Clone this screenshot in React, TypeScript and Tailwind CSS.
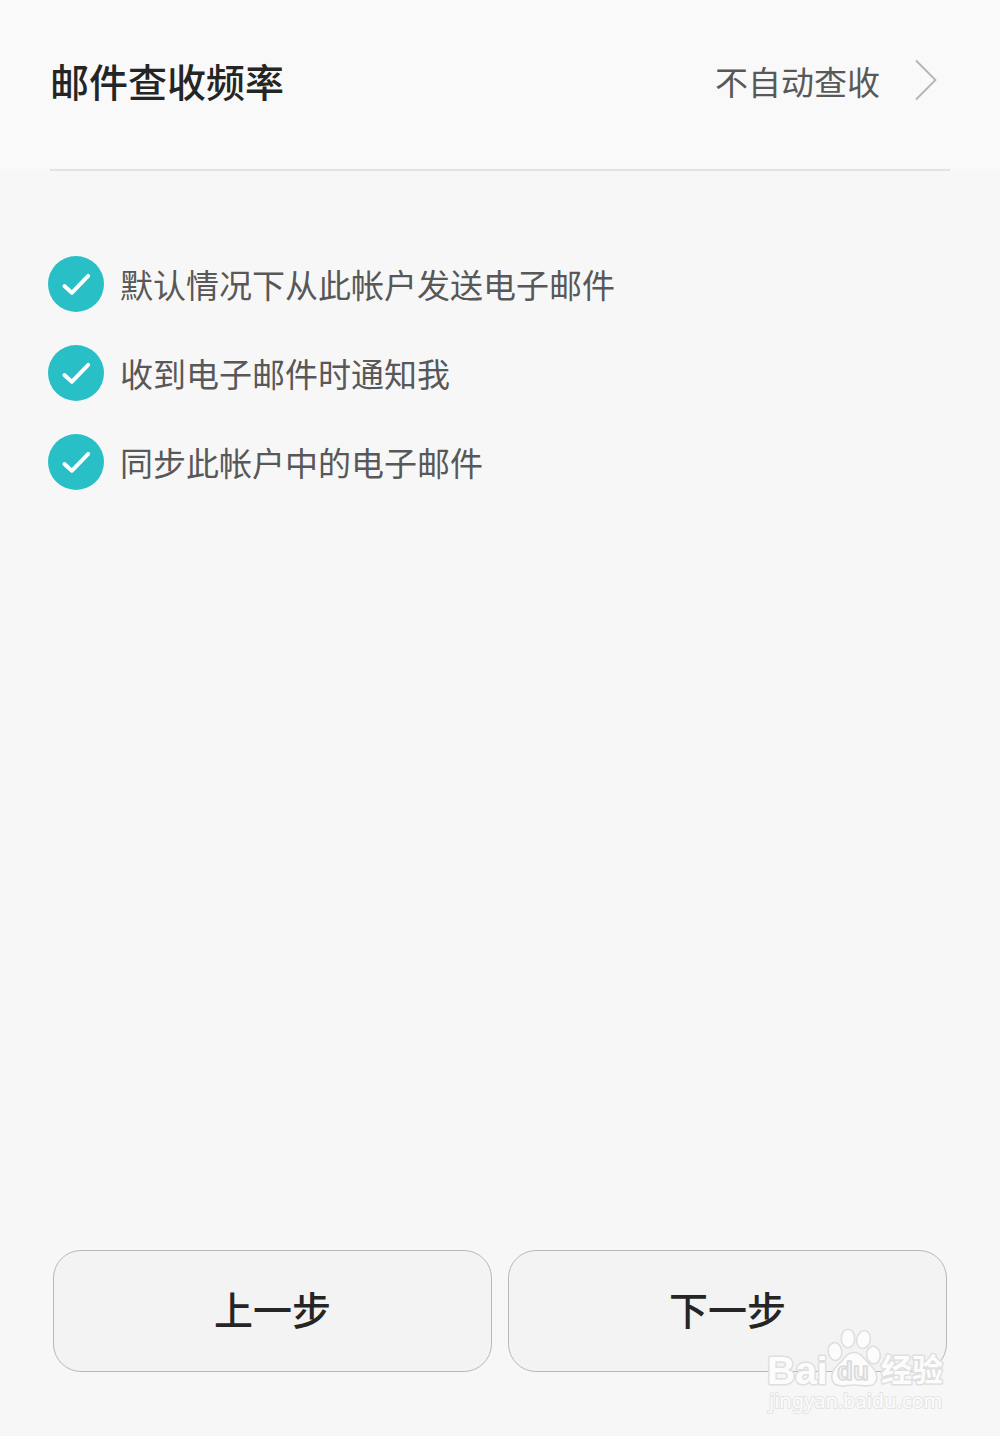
import { useState } from "react";

interface AccountOption {
  id: string;
  label: string;
}

const OPTIONS: AccountOption[] = [
  { id: "default-sender", label: "默认情况下从此帐户发送电子邮件" },
  { id: "notify", label: "收到电子邮件时通知我" },
  { id: "sync", label: "同步此帐户中的电子邮件" },
];

interface OptionRowProps {
  option: AccountOption;
  checked: boolean;
  onToggle: (id: string) => void;
}

function OptionRow({ option, checked, onToggle }: OptionRowProps) {
  return (
    <li className="flex items-center gap-4">
      <span className="relative size-14 shrink-0">
        <input
          id={option.id}
          type="checkbox"
          checked={checked}
          onChange={() => onToggle(option.id)}
          className="block size-14 appearance-none rounded-full border-2 border-[#b5b5b5] checked:border-0 checked:bg-[#29bfc7]"
        />
        {checked && (
          <svg viewBox="0 0 56 56" className="pointer-events-none absolute inset-0 size-14" fill="none" aria-hidden="true">
            <path d="M16.4 30 23.8 36.8 40.2 19.8" stroke="#fff" strokeWidth="3.9" strokeLinecap="round" strokeLinejoin="round" />
          </svg>
        )}
      </span>
      <label htmlFor={option.id} className="text-[33px] leading-10 text-[#585858]">
        {option.label}
      </label>
    </li>
  );
}

function StepButton({ children }: { children: string }) {
  return (
    <button
      type="button"
      className="h-[122px] flex-1 rounded-[28px] border border-[#b8b8b8] bg-[#f3f3f3] pb-1.5 text-[39px] font-medium text-[#252525]"
    >
      {children}
    </button>
  );
}

function Watermark() {
  return (
    <svg
      viewBox="0 0 184 92"
      className="pointer-events-none absolute right-[52px] bottom-[18px] h-[92px] w-[184px]"
      fill="#fcfcfc"
      stroke="#dfdfdf"
      strokeWidth="1.6"
      strokeLinejoin="round"
      role="img"
      aria-label="Baidu 经验"
    >
      <g paintOrder="stroke" strokeWidth="3">
        <text x="3" y="58" fontSize="39" fontWeight="700" fontFamily="'Liberation Sans', sans-serif">
          Bai
        </text>
        <text x="117" y="55" fontSize="31" fontWeight="700" fontFamily="'Noto Sans CJK SC', sans-serif">
          经验
        </text>
        <text x="5" y="82" fontSize="20" strokeWidth="2" stroke="#e4e4e4" fontFamily="'Noto Sans', sans-serif">
          jingyan.baidu.com
        </text>
      </g>

      {/* Paw print */}
      <ellipse cx="71" cy="25.5" rx="6.8" ry="9" transform="rotate(-8 71 25.5)" />
      <ellipse cx="84" cy="12.5" rx="6.8" ry="9.2" />
      <ellipse cx="99.5" cy="13.5" rx="6.8" ry="9" transform="rotate(12 99.5 13.5)" />
      <ellipse cx="109.5" cy="29" rx="6.8" ry="8.8" transform="rotate(-8 109.5 29)" />
      <path d="M90 26.5C98 26.5 101 34 106 39C113 45 115 53 110 58C105 62 99 59 90 59C81 59 76 62 70.500 58C66 53 67 45 74 39C80 34 82 26.5 90 26.5Z" />
      <text x="89" y="54" textAnchor="middle" fontSize="26" fontWeight="700" fontFamily="'Liberation Sans', sans-serif" fill="#f3f3f3" stroke="#dadada">
        du
      </text>
    </svg>
  );
}

export default function App() {
  const [checkedIds, setCheckedIds] = useState<string[]>(OPTIONS.map((o) => o.id));

  const handleToggle = (id: string) => {
    setCheckedIds((prev) => (prev.includes(id) ? prev.filter((x) => x !== id) : [...prev, id]));
  };

  return (
    <div className="relative flex min-h-screen flex-col bg-[#f7f7f7] font-['Noto_Sans_CJK_SC',sans-serif]">
      {/* Check frequency */}
      <header className="bg-[#f9f9f9] px-[50px]">
        <button
          type="button"
          className="flex w-full items-center border-b-2 border-[#e2e2e2] pt-[50px] pb-[59px] text-left"
        >
          <span className="flex-1 text-[39px] leading-[60px] font-medium text-[#252525]">邮件查收频率</span>
          <span className="pt-1 text-[33px] text-[#585858]">不自动查收</span>
          <svg viewBox="0 0 24 42" className="mr-3 ml-[34px] h-[42px] w-6" fill="none" stroke="#b3b3b3" strokeWidth="1.8" aria-hidden="true">
            <path d="M2 1.5 21.5 21 2 40.5" />
          </svg>
        </button>
      </header>

      {/* Account options */}
      <main className="flex-1 px-12 pt-[85px]">
        <ul className="flex flex-col gap-[33px]">
          {OPTIONS.map((option) => (
            <OptionRow key={option.id} option={option} checked={checkedIds.includes(option.id)} onToggle={handleToggle} />
          ))}
        </ul>
      </main>

      <footer className="flex gap-4 px-[53px] pb-16">
        <StepButton>上一步</StepButton>
        <StepButton>下一步</StepButton>
      </footer>

      <Watermark />
    </div>
  );
}
